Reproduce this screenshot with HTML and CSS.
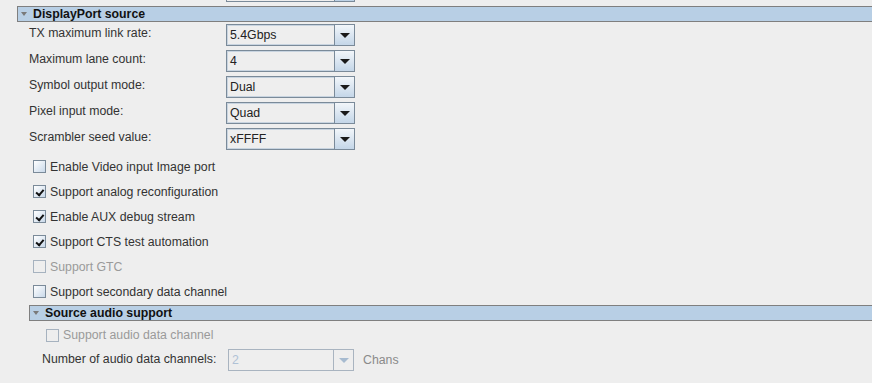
FILE: index.html
```html
<!DOCTYPE html>
<html lang="en">

<head>
    <meta charset="UTF-8">
    <title>DisplayPort source</title>
    <link rel="stylesheet" href="styles.css">
</head>

<body>

    <div class="panel">
        <!-- bottom edge of the combo from the section above -->
        <div class="stub">
            <div class="stub-field"></div>
            <div class="stub-btn"></div>
        </div>

        <div class="section-head">
            <span class="tri"></span>DisplayPort source
        </div>

        <div class="fields">
            <div class="field">
                <label>TX maximum link rate:</label>
                <div class="combo"><span class="combo-text">5.4Gbps</span><span class="combo-btn"><span class="arrow"></span></span></div>
            </div>
            <div class="field">
                <label>Maximum lane count:</label>
                <div class="combo"><span class="combo-text">4</span><span class="combo-btn"><span class="arrow"></span></span></div>
            </div>
            <div class="field">
                <label>Symbol output mode:</label>
                <div class="combo"><span class="combo-text">Dual</span><span class="combo-btn"><span class="arrow"></span></span></div>
            </div>
            <div class="field">
                <label>Pixel input mode:</label>
                <div class="combo"><span class="combo-text">Quad</span><span class="combo-btn"><span class="arrow"></span></span></div>
            </div>
            <div class="field">
                <label>Scrambler seed value:</label>
                <div class="combo"><span class="combo-text">xFFFF</span><span class="combo-btn"><span class="arrow"></span></span></div>
            </div>
        </div>

        <div class="checks">
            <div class="check"><span class="box"></span>Enable Video input Image port</div>
            <div class="check"><span class="box on"></span>Support analog reconfiguration</div>
            <div class="check"><span class="box on"></span>Enable AUX debug stream</div>
            <div class="check"><span class="box on"></span>Support CTS test automation</div>
            <div class="check off"><span class="box"></span>Support GTC</div>
            <div class="check"><span class="box"></span>Support secondary data channel</div>
        </div>

        <div class="sub">
            <div class="section-head">
                <span class="tri"></span>Source audio support
            </div>
            <div class="check off audio-check"><span class="box"></span>Support audio data channel</div>
            <div class="audio-row">
                <label>Number of audio data channels:</label>
                <div class="combo disabled"><span class="combo-text">2</span><span class="combo-btn"><span class="arrow"></span></span></div>
                <span class="unit">Chans</span>
            </div>
        </div>
    </div>

</body>

</html>
```

FILE: styles.css
```css
body {
    margin: 0;
    background-color: #eeeeee;
    font-family: "Liberation Sans", Arial, sans-serif;
    font-size: 12.3px;
    color: #333333;
    overflow: hidden;
}

.panel {
    padding-left: 17px;
}

.stub {
    display: flex;
    margin-left: 209px;
    width: 129px;
    height: 2px;
}

.stub-field {
    flex: 1;
    border-left: 1px solid #7a8a99;
    border-bottom: 1px solid #7a8a99;
    background: #eeeeee;
}

.stub-btn {
    width: 19px;
    border-left: 1px solid #7a8a99;
    border-right: 1px solid #7a8a99;
    border-bottom: 1px solid #7a8a99;
    background: #bdd2e6;
}

.section-head {
    display: flex;
    align-items: center;
    margin-top: 4px;
    height: 14px;
    border: 1px solid #7f7f7f;
    border-right: none;
    background-color: #b8cfe5;
    font-weight: bold;
    color: #111111;
}

.tri {
    width: 0;
    height: 0;
    margin: 0 6px 0 3px;
    border-left: 3px solid transparent;
    border-right: 3px solid transparent;
    border-top: 4px solid #7a7a7a;
}

.fields {
    display: flex;
    flex-direction: column;
    gap: 4px;
    margin-top: 2px;
    padding-left: 12px;
}

.field {
    display: flex;
    align-items: center;
    height: 22px;
}

.field label {
    width: 197px;
    margin-top: -4px;
}

.combo {
    display: flex;
    width: 127px;
    height: 20px;
    border: 1px solid #7a8a99;
    background: #eeeeee;
}

.combo-text {
    flex: 1;
    display: flex;
    align-items: center;
    padding-left: 2px;
    border: 1px solid #c8d4e0;
    border-right: none;
    color: #222222;
}

.combo-btn {
    display: flex;
    align-items: center;
    justify-content: center;
    width: 19px;
    border-left: 1px solid #7a8a99;
    background: linear-gradient(#f2f6fa, #c4d6e8);
}

.arrow {
    width: 0;
    height: 0;
    border-left: 5px solid transparent;
    border-right: 5px solid transparent;
    border-top: 5px solid #1a1a1a;
}

.checks {
    margin-top: 4px;
    padding-left: 16px;
}

.check {
    display: flex;
    align-items: center;
    height: 25px;
}

.box {
    box-sizing: border-box;
    width: 13px;
    height: 13px;
    margin-right: 4px;
    border: 1px solid #7a8a99;
    background: linear-gradient(135deg, #ffffff, #c9d9ea);
    position: relative;
}

.box.on::after {
    content: "";
    position: absolute;
    left: 2px;
    top: 2px;
    width: 3px;
    height: 6px;
    border-right: 2px solid #111111;
    border-bottom: 2px solid #111111;
    transform: rotate(40deg) translate(1px, -1px);
}

.check.off {
    color: #9a9a9a;
}

.check.off .box {
    border-color: #a6b2bf;
    background: #eeeeee;
}

.sub {
    margin-left: 12px;
    margin-top: 1px;
}

.sub .section-head {
    margin-top: 0;
}

.audio-check {
    margin-left: 17px;
    margin-top: 2px;
    height: 24px;
}

.audio-row {
    display: flex;
    align-items: center;
    height: 22px;
    margin-top: 2px;
    padding-left: 13px;
}

.audio-row label {
    width: 186px;
    margin-top: -3px;
}

.combo.disabled {
    width: 124px;
    border-color: #a9b4c0;
}

.combo.disabled .combo-text {
    border-color: #eeeeee;
    color: #b0c2d6;
}

.combo.disabled .combo-btn {
    border-left-color: #a9b4c0;
    background: #eeeeee;
}

.combo.disabled .arrow {
    border-top-color: #a7bbd0;
}

.unit {
    margin-left: 9px;
    color: #8a8a8a;
}
```
